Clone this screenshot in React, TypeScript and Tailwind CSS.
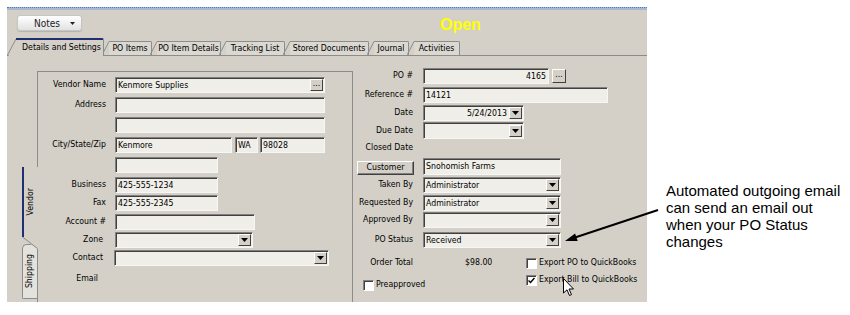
import React from 'react';

const ui = "font-['DejaVu_Sans_Condensed','Liberation_Sans',sans-serif] text-[8.7px] text-black";

function Arrow() {
    return (
        <span className="flex items-center justify-center w-[13px] h-[12px] mr-[1px] bg-[#d4d0c8] border-t border-l border-white border-r border-b border-r-[#404040] border-b-[#404040]">
            <svg width="7" height="4" viewBox="0 0 7 4"><polygon points="0,0 7,0 3.5,4" fill="#000" /></svg>
        </span>
    );
}

interface FieldProps {
    w: number;
    text?: string;
    right?: boolean;
    drop?: boolean;
    dots?: boolean;
    h?: string;
}

function Field({ w, text, right, drop, dots, h = 'h-[16px]' }: FieldProps) {
    return (
        <div style={{ width: w }} className={`${h} flex items-center bg-[#efeee8] border-t border-l border-[#808080] border-b border-r border-b-[#f6f6f4] border-r-[#f6f6f4] shadow-[inset_1px_1px_0_#404040]`}>
            <span className={`flex-1 px-[2px] pt-[1px] truncate ${right ? 'text-right' : ''}`}>{text}</span>
            {drop && <Arrow />}
            {dots && (
                <span className="flex items-center justify-center w-[13px] h-[12px] mr-[1px] bg-[#d4d0c8] border-t border-l border-white border-r border-b border-r-[#404040] border-b-[#404040] leading-none pb-[3px]">...</span>
            )}
        </div>
    );
}

function Check({ checked, label }: { checked?: boolean; label: string }) {
    return (
        <div className="flex items-center h-[16px]">
            <span className="flex items-center justify-center w-[11px] h-[11px] bg-white border-t border-l border-[#808080] shadow-[inset_1px_1px_0_#404040] border-b border-r border-b-white border-r-white">
                {checked && (
                    <svg width="7" height="7" viewBox="0 0 7 7"><path d="M0.5 3.5 L2.5 5.5 L6.5 1" stroke="#000" strokeWidth="1.5" fill="none" /></svg>
                )}
            </span>
            <span className="ml-[2px]">{label}</span>
        </div>
    );
}

export default function App() {
    const tabs = [
        { t: 'PO Items', w: 43 },
        { t: 'PO Item Details', w: 64 },
        { t: 'Tracking List', w: 59 },
        { t: 'Stored Documents', w: 79 },
        { t: 'Journal', w: 35 },
        { t: 'Activities', w: 46 },
    ];

    return (
        <div className={`relative w-[850px] h-[315px] bg-white flex pt-[7px] ${ui}`}>
            {/* Screen capture */}
            <div className="ml-[7px] w-[640px] h-[295px] flex flex-col">
                <div className="h-[3px] bg-[#a6b8d6] border-t border-dotted border-[#5b78ad]" />
                <div className="flex-1 bg-[#d4d0c8] flex flex-col">
                    {/* Header */}
                    <div className="h-[28px] flex items-start pt-[5px] pl-[10px]">
                        <button className="w-[65px] h-[16px] flex items-center rounded-[3px] border border-[#c6c6c6] bg-gradient-to-b from-white to-[#e2e2e2] shadow-[0_1px_1px_rgba(0,0,0,0.15)]">
                            <span className="flex-1 text-center pl-[6px] text-[10px] text-[#222]">Notes</span>
                            <svg width="5" height="3" viewBox="0 0 5 3" className="mr-[6px]"><polygon points="0,0 5,0 2.5,3" fill="#222" /></svg>
                        </button>
                        <span className="ml-[358px] mt-[2px] font-['Liberation_Sans',sans-serif] font-bold text-[16px] leading-[16px] text-[#ffff00]">Open</span>
                    </div>

                    {/* Tabs */}
                    <div className="h-[18px] flex items-end border-b border-[#8c8c8c]">
                        <div className="relative z-10 flex items-end -mb-px">
                            <svg width="9" height="18" viewBox="0 0 9 18" className="block"><path d="M0 18 L9 1" stroke="#8c8c8c" fill="none" /><path d="M1.5 18 L9 3.5 L9 18 Z" fill="#d4d0c8" /></svg>
                            <div className="w-[88px] h-[18px] bg-[#d4d0c8] border-t-2 border-r border-t-[#1f2f72] border-r-[#8c8c8c] rounded-tr-[2px] flex items-center justify-center pl-[4px] pb-[1px]">
                                Details and Settings
                            </div>
                        </div>
                        {tabs.map(tab => (
                            <div key={tab.t} className="flex items-end -ml-[2px]">
                                <svg width="7" height="14" viewBox="0 0 7 14" className="block"><path d="M0 14 L7 0.5" stroke="#8c8c8c" fill="none" /></svg>
                                <div style={{ width: tab.w }} className="h-[14px] bg-[#dbd8d1] border-t border-r border-[#8c8c8c] rounded-tr-[2px] flex items-center justify-center pt-[1px]">
                                    {tab.t}
                                </div>
                            </div>
                        ))}
                    </div>

                    {/* Content */}
                    <div className="flex-1 flex">
                        {/* Vendor side */}
                        <div className="w-[346px] flex pl-[15px]">
                            <div className="w-[16px] flex flex-col pt-[111px]">
                                <div className="relative z-10 w-[16px] h-[70px] bg-[#d4d0c8] border-l-2 border-[#1f2f72] flex items-center justify-center">
                                    <span className="[writing-mode:vertical-rl] rotate-180">Vendor</span>
                                </div>
                                <svg width="16" height="12" viewBox="0 0 16 12" className="block relative z-10"><path d="M0 0 L0 1 L15 12 L16 12 L16 0 Z" fill="#d4d0c8" /><path d="M0.5 0 L15.5 11.5" stroke="#8c8c8c" fill="none" /></svg>
                                <div className="-mt-[5px] w-[15px] h-[55px] bg-[#e4e2dc] border-l border-t border-b border-[#8c8c8c] rounded-tl-[5px] rounded-bl-[2px] flex items-center justify-center">
                                    <span className="[writing-mode:vertical-rl] rotate-180">Shipping</span>
                                </div>
                            </div>
                            <div className="-ml-px mt-[15px] flex-1 border-t border-l border-r border-[#8c8c8c] flex flex-col">
                                <div className="flex items-center h-[16px] mt-[5px]">
                                    <span className="w-[68px] text-right">Vendor Name</span>
                                    <div className="ml-[9px]"><Field w={210} text="Kenmore Supplies" dots /></div>
                                </div>
                                <div className="flex items-center h-[16px] mt-[4px]">
                                    <span className="w-[68px] text-right">Address</span>
                                    <div className="ml-[9px]"><Field w={210} /></div>
                                </div>
                                <div className="flex items-center h-[16px] mt-[4px]">
                                    <span className="w-[68px]" />
                                    <div className="ml-[9px]"><Field w={210} /></div>
                                </div>
                                <div className="flex items-center h-[16px] mt-[4px]">
                                    <span className="w-[68px] text-right">City/State/Zip</span>
                                    <div className="ml-[9px] flex">
                                        <Field w={117} text="Kenmore" />
                                        <div className="ml-[3px]"><Field w={23} text="WA" /></div>
                                        <div className="ml-[2px]"><Field w={65} text="98028" /></div>
                                    </div>
                                </div>
                                <div className="flex items-center h-[16px] mt-[4px]">
                                    <span className="w-[68px]" />
                                    <div className="ml-[9px]"><Field w={103} /></div>
                                </div>
                                <div className="flex items-center h-[16px] mt-[4px]">
                                    <span className="w-[68px] text-right">Business</span>
                                    <div className="ml-[9px]"><Field w={103} text="425-555-1234" /></div>
                                </div>
                                <div className="flex items-center h-[16px] mt-[2px]">
                                    <span className="w-[68px] text-right">Fax</span>
                                    <div className="ml-[9px]"><Field w={103} text="425-555-2345" /></div>
                                </div>
                                <div className="flex items-center h-[16px] mt-[3px]">
                                    <span className="w-[68px] text-right">Account #</span>
                                    <div className="ml-[9px]"><Field w={140} /></div>
                                </div>
                                <div className="flex items-center h-[16px] mt-[2px]">
                                    <span className="w-[65px] text-right">Zone</span>
                                    <div className="ml-[12px]"><Field w={138} drop /></div>
                                </div>
                                <div className="flex items-center h-[16px] mt-[2px]">
                                    <span className="w-[65px] text-right">Contact</span>
                                    <div className="ml-[11px]"><Field w={215} drop /></div>
                                </div>
                                <div className="flex items-center h-[16px] mt-[5px]">
                                    <span className="w-[60px] text-right">Email</span>
                                </div>
                            </div>
                        </div>

                        {/* PO side */}
                        <div className="flex-1 flex flex-col pt-[12px]">
                            <div className="flex items-center h-[16px]">
                                <span className="w-[60px] text-right">PO #</span>
                                <div className="ml-[10px]"><Field w={126} text="4165" right /></div>
                                <span className="ml-[3px] w-[14px] h-[14px] flex items-center justify-center bg-[#d4d0c8] border-t border-l border-white border-r border-b border-r-[#404040] border-b-[#404040] leading-none pb-[3px]">...</span>
                            </div>
                            <div className="flex items-center h-[16px] mt-[3px]">
                                <span className="w-[60px] text-right">Reference #</span>
                                <div className="ml-[10px]"><Field w={185} text="14121" /></div>
                            </div>
                            <div className="flex items-center h-[16px] mt-[2px]">
                                <span className="w-[60px] text-right">Date</span>
                                <div className="ml-[10px]"><Field w={101} text="5/24/2013" right drop /></div>
                            </div>
                            <div className="flex items-center h-[17px] mt-[1px]">
                                <span className="w-[60px] text-right">Due Date</span>
                                <div className="ml-[10px]"><Field w={101} drop h="h-[17px]" /></div>
                            </div>
                            <div className="flex items-center h-[16px] mt-[1px]">
                                <span className="w-[60px] text-right">Closed Date</span>
                            </div>
                            <div className="flex items-center h-[17px] mt-[2px]">
                                <button className="ml-[4px] w-[57px] h-[14px] mt-[3px] bg-[#d4d0c8] border-t border-l border-white border-r border-b border-r-[#404040] border-b-[#404040] shadow-[inset_-1px_-1px_0_#808080] flex items-center justify-center">Customer</button>
                                <div className="ml-[9px]"><Field w={138} text="Snohomish Farms" h="h-[17px]" /></div>
                            </div>
                            <div className="flex items-center h-[16px] mt-[2px]">
                                <span className="w-[60px] text-right">Taken By</span>
                                <div className="ml-[10px]"><Field w={138} text="Administrator" drop /></div>
                            </div>
                            <div className="flex items-center h-[16px] mt-[2px]">
                                <span className="w-[60px] text-right">Requested By</span>
                                <div className="ml-[10px]"><Field w={138} text="Administrator" drop /></div>
                            </div>
                            <div className="flex items-center h-[16px] mt-[1px]">
                                <span className="w-[60px] text-right">Approved By</span>
                                <div className="ml-[10px]"><Field w={138} drop /></div>
                            </div>
                            <div className="flex items-center h-[16px] mt-[4px]">
                                <span className="w-[60px] text-right">PO Status</span>
                                <div className="ml-[10px]"><Field w={138} text="Received" drop /></div>
                            </div>
                            <div className="flex mt-[7px]">
                                <div className="w-[173px] flex flex-col">
                                    <div className="flex items-center h-[16px]">
                                        <span className="w-[60px] text-right">Order Total</span>
                                        <span className="ml-[52px]">$98.00</span>
                                    </div>
                                    <div className="mt-[6px] pl-[10px]"><Check label="Preapproved" /></div>
                                </div>
                                <div className="flex flex-col">
                                    <Check label="Export PO to QuickBooks" />
                                    <div className="mt-[1px]"><Check checked label="Export Bill to QuickBooks" /></div>
                                </div>
                            </div>
                        </div>
                    </div>
                </div>
            </div>

            {/* Callout */}
            <div className="ml-[19px] mt-[175px] font-['Liberation_Sans',sans-serif] text-[15px] leading-[17px] text-black">
                <p>Automated outgoing email</p>
                <p>can send an email out</p>
                <p>when your PO Status</p>
                <p>changes</p>
            </div>

            {/* Arrow pointing to PO Status */}
            <svg className="absolute left-0 top-0 pointer-events-none" width="850" height="315">
                <line x1="658" y1="210" x2="575" y2="237.5" stroke="#000" strokeWidth="2" />
                <polygon points="565,241 577.7,241 575.1,233.4" fill="#000" />
            </svg>

            {/* Mouse pointer */}
            <svg className="absolute left-[563px] top-[278px]" width="12" height="19" viewBox="0 0 12 19">
                <path d="M0.5 0.5 L0.5 15 L4 11.8 L6.5 17.5 L8.5 16.6 L6 11 L10.5 11 Z" fill="#fff" stroke="#000" strokeWidth="1" strokeLinejoin="round" />
            </svg>
        </div>
    );
}
